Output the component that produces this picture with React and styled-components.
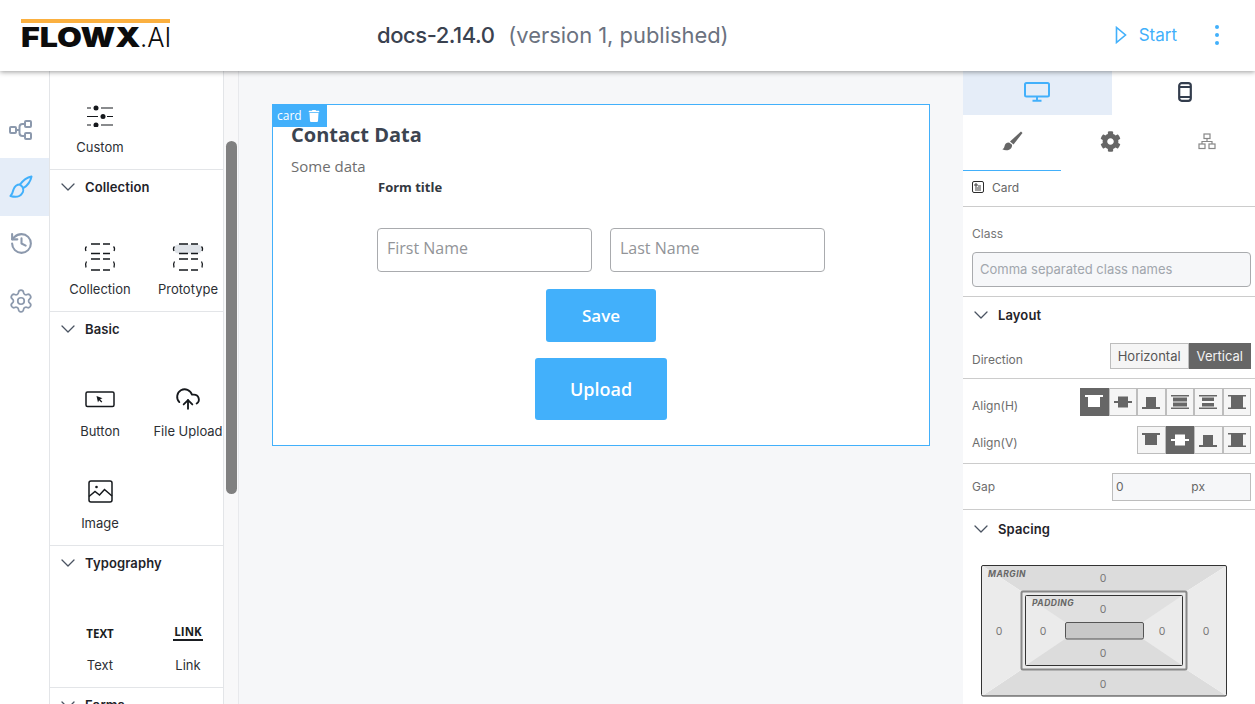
import React from "react";
import styled, { createGlobalStyle } from "styled-components";
import { ChevronDown, CloudUpload, History, Settings } from "lucide-react";
import { FaCog, FaTrash } from "react-icons/fa";

const blue = "#42b0fb";

const GlobalStyle = createGlobalStyle`
  html, body { margin: 0; padding: 0; height: 100%; overflow: hidden; }
  body { font-family: "Inter", sans-serif; background: #fff; }
  * { box-sizing: border-box; }
`;

const Page = styled.div`
  width: 1255px;
  height: 704px;
  display: flex;
  flex-direction: column;
  overflow: hidden;
`;

const Header = styled.header`
  height: 71px;
  flex: none;
  padding-bottom: 1px;
  display: flex;
  align-items: center;
  background: #fff;
  box-shadow: 0 1px 5px rgba(0, 0, 0, 0.4);
  position: relative;
  z-index: 2;
`;

const Logo = styled.div`
  width: 149px;
  margin: 0 0 0 21px;
  border-top: 4px solid #fbb040;
  height: 33px;
  flex: none;
`;

const LogoText = styled.div`
  font-size: 27px;
  line-height: 30px;
  font-weight: 900;
  color: #0c0c0c;
  white-space: nowrap;
  transform: scaleX(1.19);
  transform-origin: left top;
  span {
    display: inline-block;
    font-weight: 300;
    transform: scaleX(0.8);
    transform-origin: left center;
  }
`;

const Title = styled.div`
  margin-left: 207px;
  font-size: 22px;
  font-weight: 500;
  color: #3a4250;
  white-space: nowrap;
  b {
    font-weight: 500;
    letter-spacing: -0.45px;
  }
  span {
    margin-left: 8px;
    font-size: 21.9px;
    font-weight: 400;
    color: #6b7280;
  }
`;

const StartButton = styled.div`
  margin-left: auto;
  display: flex;
  align-items: center;
  gap: 12px;
  color: ${blue};
  font-size: 17px;
`;

const MenuDots = styled.div`
  margin: 0 36px 0 38px;
  display: flex;
  flex-direction: column;
  gap: 4px;
  i {
    width: 4px;
    height: 4px;
    border-radius: 50%;
    background: ${blue};
  }
`;

const Body = styled.div`
  flex: 1;
  display: flex;
  min-height: 0;
`;

const Rail = styled.nav`
  width: 50px;
  flex: none;
  padding-top: 30px;
  border-right: 1px solid #e3e5e8;
`;

const RailItem = styled.div`
  height: ${(p) => (p.$active ? 58 : 57)}px;
  margin-bottom: ${(p) => (p.$active ? -1 : 0)}px;
  padding-right: 7px;
  display: flex;
  align-items: center;
  justify-content: center;
  color: ${(p) => (p.$active ? blue : "#8c99ad")};
  background: ${(p) => (p.$active ? "#e5edf8" : "transparent")};
`;

const Palette = styled.aside`
  width: 174px;
  flex: none;
  padding-top: 6px;
  border-right: 1px solid #e3e5e8;
  background: #fff;
`;

const Section = styled.section`
  border-bottom: 1px solid #e3e5e8;
  &:last-child {
    border-bottom: 0;
  }
`;

const SectionHead = styled.div`
  height: ${(p) => p.$h || 34}px;
  display: flex;
  align-items: center;
  gap: 5px;
  padding-left: 6px;
  font-size: 13px;
  font-weight: 600;
  letter-spacing: 0.12px;
  color: #1f2329;
  svg {
    color: #4a5361;
    flex: none;
  }
`;

const TileGrid = styled.div`
  display: grid;
  grid-template-columns: 88px 88px;
  margin: ${(p) => (p.$flush ? 0 : 15)}px 0 0 6px;
`;

const Tile = styled.div`
  height: 92px;
  display: flex;
  flex-direction: column;
  align-items: center;
  padding-top: 22px;
  font-size: 13px;
  color: #2c2f34;
  white-space: nowrap;
`;

const TileIcon = styled.div`
  height: 32px;
  margin-bottom: 8px;
  display: flex;
  align-items: center;
  justify-content: center;
  color: #15181c;
`;

const TextGlyph = styled.span`
  font-family: "Open Sans", sans-serif;
  font-size: 11.5px;
  font-weight: 700;
  color: #1a1d21;
  ${(p) => p.$link && "border-bottom: 2px solid #1a1d21; line-height: 13px; padding: 0 1px 1px;"}
`;

const ScrollTrack = styled.div`
  width: 15px;
  flex: none;
  padding: 70px 1px 0 2px;
  background: #f8f8f9;
  border-right: 1px solid #e8e9ec;
`;

const ScrollThumb = styled.div`
  height: 353px;
  border-radius: 6px;
  background: #808080;
`;

const Canvas = styled.main`
  flex: 1;
  padding: 33px 33px 0;
  background: #f6f7f9;
  font-family: "Open Sans", sans-serif;
`;

const Card = styled.div`
  position: relative;
  width: 658px;
  height: 342px;
  background: #fff;
  border: 1px solid ${blue};
  display: flex;
  flex-direction: column;
  align-items: center;
`;

const CardBadge = styled.div`
  position: absolute;
  top: -1px;
  left: -1px;
  width: 55px;
  height: 23px;
  padding-left: 5px;
  display: flex;
  align-items: center;
  gap: 6px;
  background: ${blue};
  color: #fff;
  font-size: 12px;
`;

const CardHeading = styled.div`
  align-self: stretch;
  padding: 16px 0 2px 18px;
  h2 {
    margin: 0;
    font-size: 20px;
    line-height: 27px;
    font-weight: 700;
    color: #3c4450;
  }
  p {
    margin: 8px 0 0;
    font-size: 15px;
    line-height: 20px;
    color: #6e6e6e;
  }
`;

const FormBlock = styled.div`
  width: 448px;
  display: flex;
  flex-direction: column;
  align-items: center;
`;

const FormTitle = styled.div`
  align-self: stretch;
  padding-left: 1px;
  font-size: 13px;
  line-height: 18px;
  font-weight: 700;
  color: #333840;
`;

const FieldRow = styled.div`
  display: flex;
  gap: 18px;
  margin-top: 32px;
`;

const Field = styled.div`
  width: 215px;
  height: 44px;
  padding: 0 0 4px 9px;
  display: flex;
  align-items: center;
  border: 1px solid #a9abae;
  border-radius: 4px;
  font-size: 16px;
  color: #929498;
`;

const ActionButton = styled.div`
  margin-top: ${(p) => p.$top}px;
  width: ${(p) => p.$w}px;
  height: ${(p) => p.$h}px;
  display: flex;
  align-items: center;
  justify-content: center;
  border-radius: 3px;
  background: ${blue};
  color: #fff;
  font-size: ${(p) => p.$size}px;
  font-weight: 600;
`;

const Inspector = styled.aside`
  width: 292px;
  flex: none;
  background: #fff;
  font-size: 12px;
  color: #6d6d6d;
`;

const DeviceTabs = styled.div`
  display: grid;
  grid-template-columns: 149px 143px;
  height: 44px;
`;

const DeviceTab = styled.div`
  display: flex;
  align-items: center;
  justify-content: center;
  padding: 0 ${(p) => (p.$active ? 1 : 0)}px 2px ${(p) => (p.$active ? 0 : 3)}px;
  background: ${(p) => (p.$active ? "#e5edf8" : "#fff")};
  color: ${(p) => (p.$active ? blue : "#333d4d")};
`;

const ToolTabs = styled.div`
  display: grid;
  grid-template-columns: 98px 98px 96px;
  height: 56px;
`;

const ToolTab = styled.div`
  display: flex;
  align-items: center;
  justify-content: center;
  padding-bottom: 3px;
  color: #666;
  border-bottom: 1px solid ${(p) => (p.$active ? blue : "transparent")};
`;

const Breadcrumb = styled.div`
  height: 36px;
  padding: 0 0 3px 9px;
  display: flex;
  align-items: center;
  gap: 8px;
  font-size: 12px;
  color: #666;
  border-bottom: 1px solid #ccc;
`;

const ClassBlock = styled.div`
  height: 90px;
  padding: 19px 4px 0 9px;
  border-bottom: 1px solid #ccc;
  label {
    display: block;
    line-height: 16px;
    color: #757575;
  }
`;

const ClassInput = styled.div`
  margin-top: 10px;
  height: 35px;
  padding: 0 0 2px 7px;
  display: flex;
  align-items: center;
  font-size: 13px;
  color: #a1a6ad;
  background: #f6f7f9;
  border: 1px solid #a9abae;
  border-radius: 4px;
`;

const Row = styled.div`
  display: flex;
  justify-content: space-between;
  align-items: ${(p) => p.$align || "flex-start"};
  height: ${(p) => p.$h}px;
  padding: ${(p) => p.$top || 0}px 4px 0 9px;
  ${(p) => p.$line && "border-bottom: 1px solid #ccc;"}
`;

const RowLabel = styled.span`
  margin-top: ${(p) => p.$top || 0}px;
  color: #6d6d6d;
  line-height: 16px;
`;

const Segmented = styled.div`
  display: flex;
`;

const DirectionButton = styled.div`
  height: 26px;
  padding: 0 7px;
  display: flex;
  align-items: center;
  font-size: 13px;
  background: ${(p) => (p.$active ? "#666" : "#f5f5f5")};
  color: ${(p) => (p.$active ? "#f3f3f3" : "#555")};
  border: 1px solid ${(p) => (p.$active ? "#666" : "#bdbdbd")};
`;

const AlignButton = styled.div`
  width: 28.5px;
  height: 28px;
  display: flex;
  align-items: center;
  justify-content: center;
  background: ${(p) => (p.$active ? "#666" : "#f5f5f5")};
  color: ${(p) => (p.$active ? "#fff" : "#666")};
  border: 1px solid ${(p) => (p.$active ? "#666" : "#bdbdbd")};
`;

const GapInput = styled.div`
  width: 139px;
  height: 28px;
  padding: 0 45px 0 3px;
  display: flex;
  align-items: center;
  justify-content: space-between;
  background: #f6f7f9;
  border: 1px solid #bdbdbd;
  font-size: 12px;
  color: #666;
`;

const BoxModelWrap = styled.div`
  padding: 16px 0 0 17px;
`;

const BoxValue = styled.text`
  font-family: "Inter", sans-serif;
  font-size: 10.5px;
  fill: #777;
  text-anchor: middle;
`;

const BoxTag = styled.text`
  font-family: "Inter", sans-serif;
  font-size: 8.5px;
  font-weight: 700;
  font-style: italic;
  fill: #666;
  letter-spacing: 0.5px;
`;

const SlidersIcon = () => (
  <svg width="28" height="24" viewBox="0 0 28 24" fill="none" stroke="currentColor" strokeWidth="1.2">
    <path d="M1 5h4M15 5h12M1 13.500h11M21 13.500h6M1 22h4M15 22h12" />
    <circle cx="10" cy="5" r="2.500" fill="currentColor" stroke="none" />
    <circle cx="17" cy="13.500" r="2.500" fill="currentColor" stroke="none" />
    <circle cx="10" cy="22" r="2.500" fill="currentColor" stroke="none" />
  </svg>
);

const CollectionIcon = ({ filled }) => (
  <svg width="32" height="28" viewBox="0 0 32 28" fill="none" stroke="currentColor" strokeWidth="1.300">
    {filled && <rect x="2" y="1.500" width="28" height="9" rx="4.500" fill="#dfe3e8" stroke="none" />}
    <path d="M7 1h9M19 1h7M7 10.500h9M19 10.500h7M7 16h9M19 16h7M7 27h9M19 27h7" />
    <path d="M2.500 3.500c-1 1-1.200 3-.5 4.500M29.500 3.500c1 1 1.200 3 .5 4.500" />
    <path d="M2.500 18.500c-1 1.500-1.200 4-.5 6M29.500 18.500c1 1.500 1.200 4 .5 6" />
  </svg>
);

const ButtonIcon = () => (
  <svg width="30" height="17" viewBox="0 0 30 17" fill="none" stroke="currentColor" strokeWidth="1.500">
    <rect x="1" y="1" width="28" height="14.500" rx="1.500" />
    <path d="M11.500 5l6 2.300-2.400 1 2.200 2.400-1 .9-2.200-2.300-1.100 2.300z" fill="currentColor" stroke="none" />
  </svg>
);

const ImageIcon = () => (
  <svg width="25" height="24" viewBox="0 0 25 24" fill="none" stroke="currentColor" strokeWidth="1.500">
    <rect x="1" y="2" width="23" height="21" rx="2" />
    <circle cx="8.500" cy="8" r="1.300" fill="currentColor" stroke="none" />
    <path d="M1 17.500l6-5 4.500 3.500 5-5.500 7.500 6.500" />
  </svg>
);

const FlowIcon = () => (
  <svg width="24" height="22" viewBox="0 0 24 22" fill="none" stroke="currentColor" strokeWidth="2">
    <rect x="1" y="8" width="6" height="6" rx="1" />
    <rect x="16" y="2" width="6" height="6" rx="1" />
    <rect x="16" y="14" width="6" height="6" rx="1" />
    <path d="M7 11h3.500M16 5h-2.500c-1.500 0-3 1-3 3v6c0 2 1.500 3 3 3H16" />
  </svg>
);

const BrushIcon = () => (
  <svg width="24" height="24" viewBox="0 0 24 24" fill="none" stroke="currentColor" strokeWidth="2" strokeLinejoin="round">
    <path d="M22.500 1.500c-4.500 1-8.500 4-11.500 8l3.500 3.500c4-2.500 7-6.500 8-11.500z" />
    <path d="M11 9.500c-3.500 0-5.500 2-6.500 5-.5 2-1.500 5-3 6.500 5 1.500 9.500.5 11.500-2.500 1.500-2 1.500-4.500.5-5.500" />
  </svg>
);

const SolidBrushIcon = () => (
  <svg width="21" height="21" viewBox="0 0 21 21" fill="currentColor">
    <path d="M19 .5l1.500 1.500L11.500 13.500 8 10.500z" />
    <path d="M7 11.500c-2.800 0-4 1.700-4.500 3.700-.3 1.300-.8 2.300-2.200 3 3 1.800 7.200 1.200 9-1.300 1-1.400.9-2.800.5-3.400z" />
  </svg>
);

const MonitorIcon = () => (
  <svg width="26" height="20" viewBox="0 0 26 20" fill="none" stroke="currentColor" strokeWidth="2">
    <rect x="1" y="1" width="24" height="13.500" rx="1.500" />
    <path d="M13 15v3.500M8.500 18.800h9" />
  </svg>
);

const PhoneIcon = () => (
  <svg width="14" height="20" viewBox="0 0 14 20" fill="none" stroke="currentColor" strokeWidth="2.200">
    <rect x="1.200" y="1.200" width="11.600" height="17.600" rx="2.500" />
    <path d="M1.500 5h11M1.500 15h11" />
  </svg>
);

const TreeIcon = () => (
  <svg width="18" height="17" viewBox="0 0 18 17" fill="none" stroke="#888" strokeWidth="1.200">
    <rect x="6" y="1" width="6" height="4.500" />
    <rect x="1" y="11" width="6" height="4.500" />
    <rect x="11" y="11" width="6" height="4.500" />
    <path d="M9 5.500v3M4 11V8.500h10V11" />
  </svg>
);

const CardIcon = () => (
  <svg width="12" height="12" viewBox="0 0 12 12" fill="none" stroke="#2c2c2c">
    <rect x=".5" y=".5" width="11" height="11" rx="1.500" />
    <path d="M3 3h2v2H3zM3 7h6M3 9h6M6 5h3" strokeWidth=".9" />
  </svg>
);

const PlayIcon = () => (
  <svg width="12" height="18" viewBox="0 0 12 18" fill="none" stroke="currentColor" strokeWidth="1.600">
    <path d="M1.500 1.500v15L10.500 9z" />
  </svg>
);

const alignShapes = {
  start: <path d="M0 0h18v2H0zM3 2h12v10H3z" />,
  center: <path d="M0 6h18v2H0zM4 1.500h10v11H4z" />,
  end: <path d="M0 12h18v2H0zM4 2h10v10H4z" />,
  between: <path d="M0 0h18v1.500H0zM0 12.500h18V14H0zM2 2.500h14v4H2zM2 7.500h14v4H2z" />,
  around: <path d="M0 0h18v1.500H0zM0 12.500h18V14H0zM3 2.500h12v3.500H3zM3 8h12v3.500H3z" />,
  stretch: <path d="M0 0h18v1.500H0zM0 12.500h18V14H0zM3 1.500h12v11H3z" />,
};

const AlignIcon = ({ name }) => (
  <svg width="18" height="14" viewBox="0 0 18 14" fill="currentColor">
    {alignShapes[name]}
  </svg>
);

const boxValues = [
  [123, 18],
  [123, 49],
  [123, 93],
  [123, 124],
  [19, 71],
  [63, 71],
  [182, 71],
  [226, 71],
];

// margin / padding diagram from the style panel
const BoxModel = () => (
  <svg width="248" height="134" viewBox="0 0 248 134">
    <path d="M2 1.500h245L207 27H41z" fill="#dcdcdc" />
    <path d="M2 132h245l-40-26H41z" fill="#dcdcdc" />
    <path d="M2 1.500L41 27v79L2 132z" fill="#ebebeb" />
    <path d="M247 1.500L207 27v79l40 26z" fill="#ebebeb" />
    <rect x="1.500" y="1.500" width="245" height="130.500" rx="1.500" fill="none" stroke="#333" />
    <rect x="41.500" y="27.500" width="165" height="78" rx="1.500" fill="#ebebeb" stroke="#888" strokeWidth="2" />
    <path d="M45 31h158l-40 27H85z" fill="#e0e0e0" />
    <path d="M45 102h158l-40-27H85z" fill="#dcdcdc" />
    <rect x="45.500" y="31.500" width="157" height="70" rx="1" fill="none" stroke="#333" />
    <rect x="85.500" y="58.500" width="78" height="16.500" rx="1.500" fill="#c8c8c8" stroke="#555" />
    <BoxTag x="8" y="13">MARGIN</BoxTag>
    <BoxTag x="52" y="42">PADDING</BoxTag>
    {boxValues.map(([x, y]) => (
      <BoxValue key={`${x}-${y}`} x={x} y={y}>
        0
      </BoxValue>
    ))}
  </svg>
);

const paletteSections = [
  {
    title: "Collection",
    tiles: [
      { name: "Collection", icon: <CollectionIcon /> },
      { name: "Prototype", icon: <CollectionIcon filled /> },
    ],
  },
  {
    title: "Basic",
    tiles: [
      { name: "Button", icon: <ButtonIcon /> },
      { name: "File Upload", icon: <CloudUpload size={26} strokeWidth={1.7} /> },
      { name: "Image", icon: <ImageIcon /> },
    ],
  },
  {
    title: "Typography",
    tiles: [
      { name: "Text", icon: <TextGlyph>TEXT</TextGlyph> },
      { name: "Link", icon: <TextGlyph $link>LINK</TextGlyph> },
    ],
  },
];

const Chevron = () => <ChevronDown size={24} strokeWidth={1.3} />;

const App = () => (
  <Page>
    <GlobalStyle />
    <Header>
      <Logo>
        <LogoText>
          FLOWX<span>.AI</span>
        </LogoText>
      </Logo>
      <Title>
        <b>docs-2.14.0</b> <span>(version 1, published)</span>
      </Title>
      <StartButton>
        <PlayIcon />
        Start
      </StartButton>
      <MenuDots>
        <i />
        <i />
        <i />
      </MenuDots>
    </Header>
    <Body>
      <Rail>
        <RailItem>
          <FlowIcon />
        </RailItem>
        <RailItem $active>
          <BrushIcon />
        </RailItem>
        <RailItem>
          <History size={25} strokeWidth={2} />
        </RailItem>
        <RailItem>
          <Settings size={26} strokeWidth={1.6} />
        </RailItem>
      </Rail>
      <Palette>
        <Section>
          <TileGrid $flush>
            <Tile>
              <TileIcon>
                <SlidersIcon />
              </TileIcon>
              Custom
            </Tile>
          </TileGrid>
        </Section>
        {paletteSections.map((section) => (
          <Section key={section.title}>
            <SectionHead>
              <Chevron />
              {section.title}
            </SectionHead>
            <TileGrid>
              {section.tiles.map((tile) => (
                <Tile key={tile.name}>
                  <TileIcon>{tile.icon}</TileIcon>
                  {tile.name}
                </Tile>
              ))}
            </TileGrid>
          </Section>
        ))}
        <Section>
          <SectionHead>
            <Chevron />
            Forms
          </SectionHead>
        </Section>
      </Palette>
      <ScrollTrack>
        <ScrollThumb />
      </ScrollTrack>
      <Canvas>
        <Card>
          <CardBadge>
            card <FaTrash size={12} />
          </CardBadge>
          <CardHeading>
            <h2>Contact Data</h2>
            <p>Some data</p>
          </CardHeading>
          <FormBlock>
            <FormTitle>Form title</FormTitle>
            <FieldRow>
              <Field>First Name</Field>
              <Field>Last Name</Field>
            </FieldRow>
            <ActionButton $top={17} $w={110} $h={53} $size={17}>
              Save
            </ActionButton>
            <ActionButton $top={16} $w={132} $h={62} $size={18}>
              Upload
            </ActionButton>
          </FormBlock>
        </Card>
      </Canvas>
      <Inspector>
        <DeviceTabs>
          <DeviceTab $active>
            <MonitorIcon />
          </DeviceTab>
          <DeviceTab>
            <PhoneIcon />
          </DeviceTab>
        </DeviceTabs>
        <ToolTabs>
          <ToolTab $active>
            <SolidBrushIcon />
          </ToolTab>
          <ToolTab>
            <FaCog size={21} />
          </ToolTab>
          <ToolTab>
            <TreeIcon />
          </ToolTab>
        </ToolTabs>
        <Breadcrumb>
          <CardIcon />
          Card
        </Breadcrumb>
        <ClassBlock>
          <label>Class</label>
          <ClassInput>Comma separated class names</ClassInput>
        </ClassBlock>
        <SectionHead $h={36}>
          <Chevron />
          Layout
        </SectionHead>
        <Row $h={46} $top={10} $line>
          <RowLabel $top={9}>Direction</RowLabel>
          <Segmented>
            <DirectionButton>Horizontal</DirectionButton>
            <DirectionButton $active>Vertical</DirectionButton>
          </Segmented>
        </Row>
        <Row $h={47} $top={9}>
          <RowLabel $top={10}>Align(H)</RowLabel>
          <Segmented>
            <AlignButton $active><AlignIcon name="start" /></AlignButton>
            <AlignButton><AlignIcon name="center" /></AlignButton>
            <AlignButton><AlignIcon name="end" /></AlignButton>
            <AlignButton><AlignIcon name="between" /></AlignButton>
            <AlignButton><AlignIcon name="around" /></AlignButton>
            <AlignButton><AlignIcon name="stretch" /></AlignButton>
          </Segmented>
        </Row>
        <Row $h={38} $line>
          <RowLabel $top={9}>Align(V)</RowLabel>
          <Segmented>
            <AlignButton><AlignIcon name="start" /></AlignButton>
            <AlignButton $active><AlignIcon name="center" /></AlignButton>
            <AlignButton><AlignIcon name="end" /></AlignButton>
            <AlignButton><AlignIcon name="stretch" /></AlignButton>
          </Segmented>
        </Row>
        <Row $h={46} $line $align="center">
          <RowLabel>Gap</RowLabel>
          <GapInput>
            <span>0</span>
            <span>px</span>
          </GapInput>
        </Row>
        <SectionHead $h={38}>
          <Chevron />
          Spacing
        </SectionHead>
        <BoxModelWrap>
          <BoxModel />
        </BoxModelWrap>
      </Inspector>
    </Body>
  </Page>
);

export default App;
